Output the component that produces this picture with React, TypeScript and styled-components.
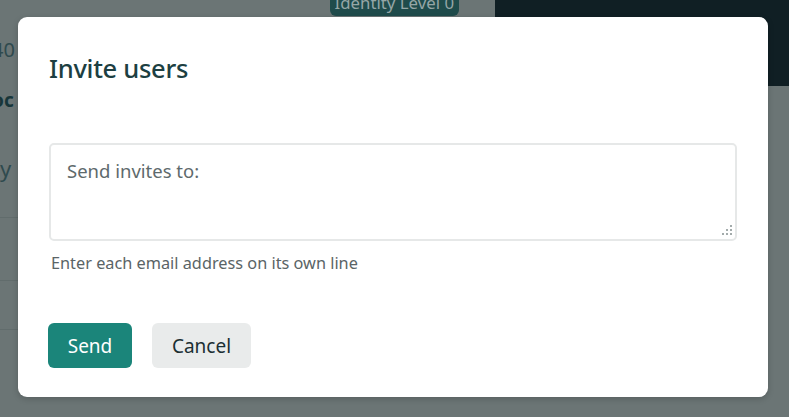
import React from "react";
import styled, { createGlobalStyle } from "styled-components";

const Global = createGlobalStyle`
  html, body { margin: 0; padding: 0; }
  body {
    width: 789px;
    height: 417px;
    overflow: hidden;
    font-family: "Noto Sans", "Open Sans", sans-serif;
    background: #6b7575;
  }
`;

const Page = styled.div`
  position: relative;
  width: 789px;
  height: 417px;
  overflow: hidden;
  background: #6b7575;
`;

const Backdrop = styled.div`
  display: grid;
  grid-template-columns: 495px 1fr;
  height: 100%;
`;

const BgLeft = styled.div`
  display: flex;
  flex-direction: column;
  color: #2f4a4e;
`;

const BadgeRow = styled.div`
  height: 16px;
  display: flex;
  justify-content: flex-end;
  padding-right: 36px;
`;

const Badge = styled.span`
  margin-top: -8px;
  height: 24px;
  padding: 0 5px;
  border-radius: 6px;
  background: #1f4b4b;
  color: #95a6a6;
  font-size: 16.8px;
  line-height: 22px;
  white-space: nowrap;
`;

const BgText = styled.div<{ $top: number; $bold?: boolean; $size: number }>`
  margin-top: ${(p) => p.$top}px;
  margin-left: -8px;
  font-size: ${(p) => p.$size}px;
  line-height: 22px;
  font-weight: ${(p) => (p.$bold ? 700 : 400)};
  color: ${(p) => (p.$bold ? "#17363a" : "#2f4a4e")};
`;

const BgRule = styled.div<{ $top: number }>`
  margin-top: ${(p) => p.$top}px;
  height: 1px;
  width: 40px;
  background: #616c6c;
`;

const BgDark = styled.div`
  height: 86px;
  background: #101f24;
`;

const Modal = styled.div`
  position: absolute;
  left: 18px;
  top: 17px;
  width: 750px;
  height: 380px;
  box-sizing: border-box;
  background: #ffffff;
  border-radius: 9px;
  padding: 0 31px;
  display: flex;
  flex-direction: column;
  box-shadow: 0 2px 6px rgba(0, 0, 0, 0.18);
`;

const Title = styled.h2`
  margin: 33px 0 0 0;
  font-size: 25.5px;
  line-height: 36px;
  font-weight: 500;
  color: #1d3f42;
  letter-spacing: -0.3px;
`;

const FieldWrap = styled.div`
  position: relative;
  margin-top: 57px;
  width: 688px;
  height: 98px;
`;

const Field = styled.textarea`
  display: block;
  width: 100%;
  height: 100%;
  box-sizing: border-box;
  border: 2px solid #e6e8e8;
  border-radius: 5px;
  padding: 14px 16px;
  font-family: inherit;
  font-size: 18.5px;
  line-height: 24px;
  color: #1d3f42;
  resize: none;
  outline: none;
  &::placeholder { color: #5e6a6c; }
`;

const Grip = styled.svg`
  position: absolute;
  right: 5px;
  bottom: 5px;
  width: 11px;
  height: 11px;
  pointer-events: none;
`;

const Help = styled.div`
  margin-top: 11px;
  margin-left: 2px;
  font-size: 16.3px;
  line-height: 22px;
  color: #5a6466;
`;

const Actions = styled.div`
  margin-top: 49px;
  display: flex;
  gap: 20px;
  margin-left: -1px;
`;

const Button = styled.button<{ $primary?: boolean }>`
  height: 45px;
  width: ${(p) => (p.$primary ? 84 : 99)}px;
  padding: 0;
  border: none;
  border-radius: 6px;
  font-family: inherit;
  font-size: 19px;
  background: ${(p) => (p.$primary ? "#1b857a" : "#e9ebeb")};
  color: ${(p) => (p.$primary ? "#ffffff" : "#1b2f33")};
  cursor: pointer;
`;

export default function App() {
  return (
    <>
      <Global />
      <Page>
        <Backdrop>
          <BgLeft>
            <BadgeRow>
              <Badge>Identity Level 0</Badge>
            </BadgeRow>
            <BgText $top={23} $size={20}>40</BgText>
            <BgText $top={28} $bold $size={19}>oc</BgText>
            <BgText $top={46} $size={22}>ty</BgText>
            <BgRule $top={38} />
            <BgRule $top={62} />
            <BgRule $top={48} />
          </BgLeft>
          <BgDark />
        </Backdrop>
        <Modal>
          <Title>Invite users</Title>
          <FieldWrap>
            <Field placeholder="Send invites to:" />
            <Grip viewBox="0 0 11 11">
              <g fill="#a3abab">
                <rect x="9" y="0" width="2" height="2" />
                <rect x="5" y="4" width="2" height="2" />
                <rect x="9" y="4" width="2" height="2" />
                <rect x="1" y="8" width="2" height="2" />
                <rect x="5" y="8" width="2" height="2" />
                <rect x="9" y="8" width="2" height="2" />
              </g>
            </Grip>
          </FieldWrap>
          <Help>Enter each email address on its own line</Help>
          <Actions>
            <Button $primary>Send</Button>
            <Button>Cancel</Button>
          </Actions>
        </Modal>
      </Page>
    </>
  );
}
